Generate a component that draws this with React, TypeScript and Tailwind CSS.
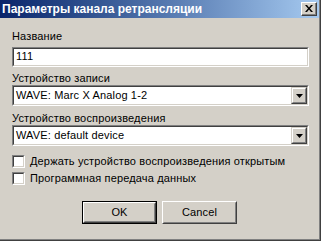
import React from "react";

const font = { fontFamily: '"Liberation Sans", Arial, sans-serif' };

function Sunken({ className = "", children }: { className?: string; children?: React.ReactNode }) {
  return (
    <div className={`border border-t-[#808080] border-l-[#808080] border-b-white border-r-white ${className}`}>
      <div className="h-full w-full border border-t-[#404040] border-l-[#404040] border-b-[#d4d0c8] border-r-[#d4d0c8] bg-white">
        {children}
      </div>
    </div>
  );
}

function Arrow() {
  return (
    <div className="h-[17px] w-[16px] border border-t-[#d4d0c8] border-l-[#d4d0c8] border-b-[#404040] border-r-[#404040] bg-[#d4d0c8]">
      <div className="flex h-full w-full items-center justify-center border border-t-white border-l-white border-b-[#808080] border-r-[#808080]">
        <svg width="7" height="4" viewBox="0 0 7 4">
          <path d="M0 0h7L3.5 4z" fill="#000" />
        </svg>
      </div>
    </div>
  );
}

function Select({ value }: { value: string }) {
  return (
    <Sunken className="h-[21px] w-[297px]">
      <div className="flex h-full items-center justify-between">
        <span className="pl-[2px] text-[11px] leading-[13px] tracking-[0.15px] text-black">{value}</span>
        <Arrow />
      </div>
    </Sunken>
  );
}

function Check({ label }: { label: string }) {
  return (
    <div className="flex items-center">
      <Sunken className="h-[13px] w-[13px] shrink-0" />
      <span className="ml-[5px] text-[11px] leading-[13px] tracking-[0.15px] text-black">{label}</span>
    </div>
  );
}

function Button({ label, def }: { label: string; def?: boolean }) {
  return (
    <div className={`h-[23px] w-[75px] ${def ? "border border-black" : ""}`}>
      <div className="h-full w-full border border-t-white border-l-white border-b-[#404040] border-r-[#404040]">
        <div className="flex h-full w-full items-center justify-center border border-t-[#d4d0c8] border-l-[#d4d0c8] border-b-[#808080] border-r-[#808080] text-[11px] tracking-[0.15px] text-black">
          {label}
        </div>
      </div>
    </div>
  );
}

export default function App() {
  return (
    <div style={font} className="h-[241px] w-[321px] overflow-hidden bg-[#d4d0c8]">
      <div className="h-full w-full border-b border-r border-b-[#404040] border-r-[#404040]">
        <div className="flex h-full w-full flex-col border-b border-r border-b-[#808080] border-r-[#808080]">
          <div className="flex h-[18px] items-center justify-between bg-gradient-to-r from-[#0a246a] to-[#a6caf0] pl-[2px] pr-[2px]">
            <span className="text-[12px] font-bold leading-[14px] text-white">Параметры канала ретрансляции</span>
            <div className="h-[14px] w-[16px] border border-t-white border-l-white border-b-[#404040] border-r-[#404040] bg-[#d4d0c8]">
              <div className="flex h-full w-full items-center justify-center border-b border-r border-b-[#808080] border-r-[#808080]">
                <svg width="8" height="7" viewBox="0 0 8 7">
                  <path d="M0 0h2l2 2.5L6 0h2L5 3.5 8 7H6L4 4.5 2 7H0l3-3.5z" fill="#000" />
                </svg>
              </div>
            </div>
          </div>
          <div className="flex flex-col pl-[12px] pt-[12px]">
            <div className="text-[11px] leading-[13px] tracking-[0.15px] text-black">Название</div>
            <Sunken className="mt-[4px] h-[20px] w-[297px]">
              <div className="pl-[2px] pt-[1px] text-[11px] leading-[13px] tracking-[0.15px] text-black">111</div>
            </Sunken>
            <div className="mt-[5px] text-[11px] leading-[13px] tracking-[0.15px] text-black">Устройство записи</div>
            <Select value="WAVE: Marc X Analog 1-2" />
            <div className="mt-[6px] text-[11px] leading-[13px] tracking-[0.15px] text-black">Устройство воспроизведения</div>
            <Select value="WAVE: default device" />
            <div className="mt-[9px] flex flex-col gap-[4px]">
              <Check label="Держать устройство воспроизведения открытым" />
              <Check label="Программная передача данных" />
            </div>
            <div className="mt-[16px] flex gap-[5px] pl-[70px]">
              <Button label="OK" def />
              <Button label="Cancel" />
            </div>
          </div>
        </div>
      </div>
    </div>
  );
}
